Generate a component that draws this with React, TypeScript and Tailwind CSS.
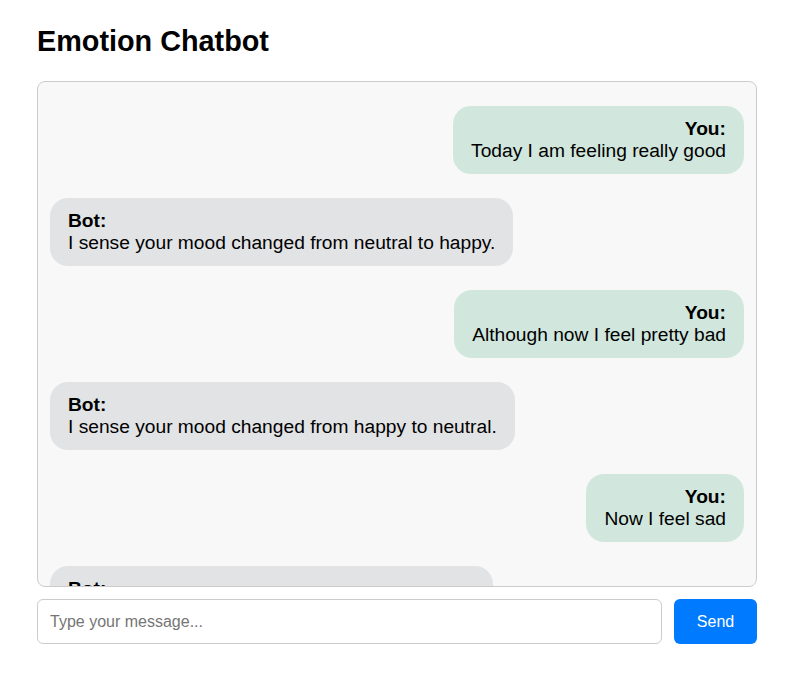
import React, { useState } from "react";

type Message = {
  from: "user" | "bot";
  text: string;
};

const messages: Message[] = [
  { from: "user", text: "Today I am feeling really good" },
  { from: "bot", text: "I sense your mood changed from neutral to happy." },
  { from: "user", text: "Although now I feel pretty bad" },
  { from: "bot", text: "I sense your mood changed from happy to neutral." },
  { from: "user", text: "Now I feel sad" },
  { from: "bot", text: "I sense your mood changed from neutral to sad." },
];

export default function App() {
  const [input, setInput] = useState("");

  return (
    <div className="min-h-screen bg-white px-[37px] pt-[25px] font-['Liberation_Sans',Arial,sans-serif] text-black">
      <h1 className="mb-[23px] text-[28.8px] font-bold leading-[33px]">Emotion Chatbot</h1>

      <div className="w-[720px]">
        {/* chat window */}
        <div className="flex h-[506px] flex-col overflow-hidden rounded-lg border border-[#ccc] bg-[#f8f8f8] p-3">
          {messages.map((m, i) =>
            m.from === "user" ? (
              <div
                key={i}
                className="my-3 max-w-[70%] self-end rounded-[18px] bg-[#d1e7dd] px-[18px] py-3 text-right text-[19.2px] leading-[22px]"
              >
                <div className="font-bold">You:</div>
                <div>{m.text}</div>
              </div>
            ) : (
              <div
                key={i}
                className="my-3 max-w-[70%] self-start rounded-[18px] bg-[#e2e3e5] px-[18px] py-3 text-left text-[19.2px] leading-[22px]"
              >
                <div className="font-bold">Bot:</div>
                <div>{m.text}</div>
              </div>
            )
          )}
        </div>

        {/* input row */}
        <div className="mt-3 flex gap-3">
          <input
            type="text"
            placeholder="Type your message..."
            value={input}
            onChange={(e) => setInput(e.target.value)}
            className="h-[45px] flex-1 rounded-md border border-[#ccc] bg-white px-3 pt-px font-['Liberation_Sans',Arial,sans-serif] text-base text-black placeholder-[#757575] focus:outline-none"
          />
          <button className="h-[45px] w-[83px] rounded-md bg-[#007bff] pt-px text-base text-white">
            Send
          </button>
        </div>
      </div>
    </div>
  );
}
